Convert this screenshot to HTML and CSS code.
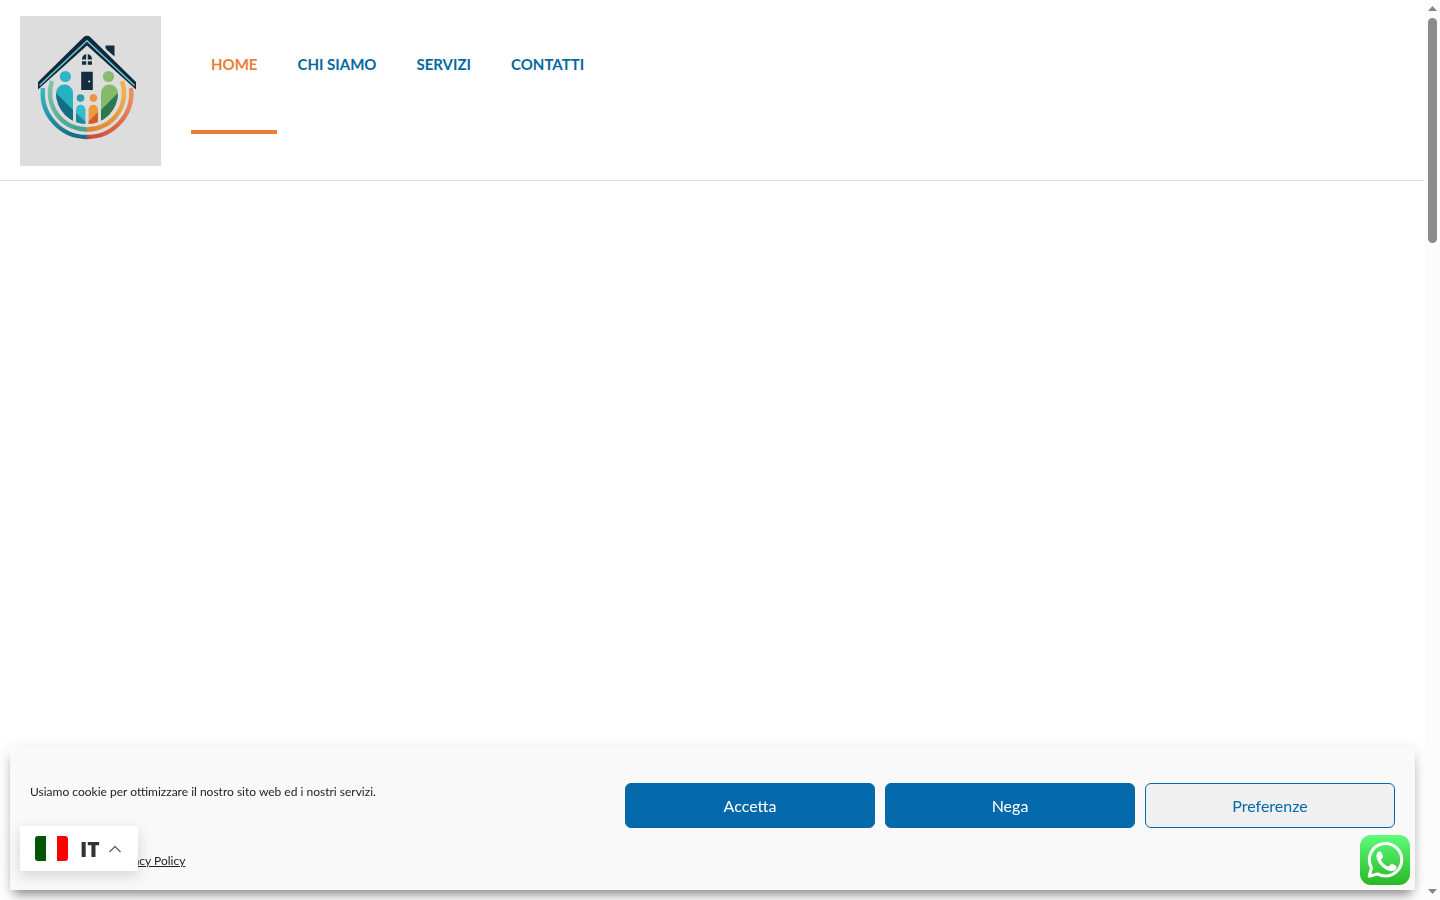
FILE: index.html
```html
<!DOCTYPE html>
<html lang="it">
<head>
<meta charset="utf-8">
<meta name="viewport" content="width=device-width, initial-scale=1">
<title>Home</title>
<link rel="stylesheet" href="styles.css">
</head>
<body>
<header class="site-header">
  <a class="logo" href="#" aria-label="Home">
    <svg viewBox="20 16 141 150" width="141" height="150" aria-hidden="true">
      <defs>
        <linearGradient id="outerL" x1="0" y1="0" x2="0.6" y2="1"><stop offset="0" stop-color="#35b8c6"/><stop offset="1" stop-color="#176d88"/></linearGradient>
        <linearGradient id="outerR" x1="0" y1="1" x2="0.7" y2="0"><stop offset="0" stop-color="#cc4639"/><stop offset="1" stop-color="#ee8c5c"/></linearGradient>
        <linearGradient id="innerL" x1="0" y1="0" x2="0.6" y2="1"><stop offset="0" stop-color="#7fc5aa"/><stop offset="1" stop-color="#4da393"/></linearGradient>
        <linearGradient id="innerR" x1="0" y1="1" x2="0.7" y2="0"><stop offset="0" stop-color="#df822f"/><stop offset="1" stop-color="#efb04e"/></linearGradient>
        <clipPath id="bowl"><circle cx="87" cy="93" r="31"/></clipPath>
        <clipPath id="adultL"><path d="M56 130V93a8.500 8.500 0 0 1 17 0V130z"/></clipPath>
        <clipPath id="adultR"><path d="M101 130V93a8.500 8.500 0 0 1 17 0V130z"/></clipPath>
        <clipPath id="childL"><path d="M76 130V109.500a4.700 4.700 0 0 1 9.400 0V130z"/></clipPath>
        <clipPath id="childR"><path d="M88.600 130V109.500a4.700 4.700 0 0 1 9.400 0V130z"/></clipPath>
      </defs>
      <rect x="20" y="16" width="141" height="150" fill="#dcdddc"/>
      <g fill="none" stroke-width="4.400">
        <path d="M43 88A44 44 0 0 0 87 137" stroke="url(#outerL)"/>
        <path d="M87 137A44 44 0 0 0 131 88" stroke="url(#outerR)"/>
        <path d="M52 81A36.500 36.500 0 0 0 87 129.500" stroke="url(#innerL)"/>
        <path d="M87 129.500A36.500 36.500 0 0 0 122 81" stroke="url(#innerR)"/>
      </g>
      <path d="M105.500 45.500h9v11l-7.500-6.500-1.500-2z" fill="#142c3d"/>
      <path d="M38 82L83.500 37.300a5 5 0 0 1 7 0L136 82v7.500L87 45.500 38 89.500z" fill="#102a3b"/>
      <path d="M39.500 85.500L87 40.800 134.500 85.500" fill="none" stroke="#6fcbd3" stroke-width="1.500"/>
      <path d="M82 59.500a5 5 0 0 1 4.200-5.500v5.500zM87.800 54a5 5 0 0 1 4.200 5.500h-4.200zM82 61.300h4.200v3.500H82zM87.800 61.300H92v3.500h-4.200zM81.200 71.800h11.600V90H81.200z" fill="#142c3d"/>
      <circle cx="89.200" cy="81.500" r="1" fill="#eee"/>
      <circle cx="65.400" cy="76.500" r="5.600" fill="#2fb5c5"/>
      <circle cx="108.500" cy="76.500" r="5.600" fill="#8abb6d"/>
      <circle cx="80.500" cy="98" r="3.800" fill="#299eaf"/>
      <circle cx="93.400" cy="98" r="3.800" fill="#ed933f"/>
      <g clip-path="url(#bowl)">
        <g clip-path="url(#adultL)"><path d="M54 82h21v50H54z" fill="#25b3c4"/><path d="M54 91l20 20v20H54z" fill="#146c85"/></g>
        <g clip-path="url(#adultR)"><path d="M100 82h20v50h-20z" fill="#85b96b"/><path d="M120 91l-20 20v20h20z" fill="#2d7851"/></g>
        <g clip-path="url(#childL)"><path d="M75 103h12v24H75z" fill="#37bdca"/><path d="M75 112l11 10v5H75z" fill="#218799"/></g>
        <g clip-path="url(#childR)"><path d="M88 103h11v24H88z" fill="#f09a3e"/><path d="M88 122l11-11v15H88z" fill="#d75a2c"/></g>
      </g>
    </svg>
  </a>
  <nav class="menu" aria-label="Principale">
    <a class="menu-item current" href="#" aria-current="page">HOME</a>
    <a class="menu-item" href="#">CHI SIAMO</a>
    <a class="menu-item" href="#">SERVIZI</a>
    <a class="menu-item" href="#">CONTATTI</a>
  </nav>
</header>
<main></main>

<section class="cookie" aria-label="Consenso cookie">
  <div class="cookie-row">
    <p class="message">Usiamo cookie per ottimizzare il nostro sito web ed i nostri servizi.</p>
    <div class="buttons">
      <button class="btn" type="button">Accetta</button>
      <button class="btn" type="button">Nega</button>
      <button class="btn outline" type="button">Preferenze</button>
    </div>
  </div>
  <div class="links"><a href="#">Privacy Policy</a></div>
</section>

<button class="language" type="button">
  <svg class="flag" viewBox="0 0 33 25" width="33" height="25" aria-hidden="true">
    <path d="M3 0h8v25H3a3 3 0 0 1-3-3V3a3 3 0 0 1 3-3z" fill="#005700"/>
    <path d="M22 0h8a3 3 0 0 1 3 3v19a3 3 0 0 1-3 3h-8z" fill="#fc0000"/>
  </svg>
  <span>IT</span>
  <svg class="chevron" viewBox="0 0 12 8" width="12" height="8" aria-hidden="true"><path d="M.5 7L6 1.500 11.500 7" fill="none" stroke="#666" stroke-width="1.400"/></svg>
</button>

<a class="whatsapp" href="#" aria-label="WhatsApp">
  <svg viewBox="0 0 50 50" width="50" height="50" aria-hidden="true">
    <defs><linearGradient id="wa" x1="0" y1="0" x2="0" y2="1"><stop offset="0" stop-color="#5ffb7b"/><stop offset="1" stop-color="#28b826"/></linearGradient></defs>
    <rect width="50" height="50" rx="11" fill="url(#wa)"/>
    <path d="M9.200 41.200l2.300-8.400a16.200 16.200 0 1 1 6.200 6.100z" fill="none" stroke="#fff" stroke-width="3" stroke-linejoin="round"/>
    <path d="M19 16.500h1.200c.5 0 .9.300 1.100.8l1.700 4c.2.500.1.900-.2 1.300l-1.500 1.900c-.3.300-.3.700-.1 1 1.600 2.700 3.800 4.700 6.800 6 .4.200.8.100 1-.2l1.800-2.200c.3-.4.700-.5 1.200-.3l3.900 1.900c.5.200.7.500.7.900 0 3-2.400 4.700-4.700 4.700-2.800 0-7.200-2-10.200-5-2.800-2.800-5.200-6.600-5.200-9.700 0-2.200 1-5.100 2.500-5.100z" fill="#fff"/>
  </svg>
</a>

<div class="scrollbar" aria-hidden="true">
  <svg viewBox="0 0 9 5" width="9" height="5"><path d="M0 5L4.500 0 9 5z" fill="#858585"/></svg>
  <div class="track"><div class="thumb"></div></div>
  <svg viewBox="0 0 9 5" width="9" height="5"><path d="M0 0h9L4.500 5z" fill="#858585"/></svg>
</div>
</body>
</html>
```
FILE: styles.css
```css
* { box-sizing: border-box; }

body {
  margin: 0;
  padding-right: 15px;
  min-height: 100vh;
  background: #fff;
  font-family: Lato, "Open Sans", sans-serif;
}

.site-header {
  display: flex;
  gap: 30px;
  padding: 16px 20px 14px;
  border-bottom: 1px solid #e2e2e2;
}

.logo svg { display: block; }

.menu {
  display: flex;
  align-items: flex-start;
}

.menu-item {
  height: 118px;
  padding: 36px 20px 0;
  color: #0369a1;
  font-size: 15px;
  font-weight: 700;
  line-height: 25px;
  text-decoration: none;
}

.menu-item.current {
  color: #ec7d34;
  border-bottom: 4px solid #ec7d34;
}

.cookie {
  position: fixed;
  left: 10px;
  right: 25px;
  bottom: 10px;
  padding: 36px 20px 20px;
  background: #f9f9f9;
  box-shadow: 0 8px 10px -4px rgba(0, 0, 0, .4), 0 4px 16px rgba(0, 0, 0, .14);
  color: #222;
  font-size: 12px;
  line-height: 18px;
}

.cookie-row {
  display: flex;
  justify-content: space-between;
  gap: 20px;
}

.message { margin: 0; }

.buttons {
  display: flex;
  gap: 10px;
}

.btn {
  width: 250px;
  height: 45px;
  border: 1px solid #0369aa;
  border-radius: 6px;
  background: #0369aa;
  color: #fff;
  font-family: inherit;
  font-size: 16px;
}

.btn.outline {
  background: #f0f0f0;
  color: #0369aa;
}

.links {
  padding: 24px 0 0 83px;
}

.links a { color: #222; }

.language {
  position: fixed;
  left: 20px;
  bottom: 29px;
  display: flex;
  align-items: center;
  width: 118px;
  height: 45px;
  padding: 0 15px;
  border: 0;
  background: #fff;
  box-shadow: 0 5px 15px rgba(0, 0, 0, .15);
  color: #333;
  font-family: "Open Sans", sans-serif;
  font-size: 21px;
  font-weight: 800;
}

.language span { margin: 0 9px 0 12px; }

.whatsapp {
  position: fixed;
  right: 30px;
  bottom: 15px;
}

.whatsapp svg { display: block; }

.scrollbar {
  position: fixed;
  top: 0;
  right: 0;
  bottom: 0;
  display: flex;
  flex-direction: column;
  align-items: center;
  gap: 7px;
  width: 15px;
  padding: 6px 0;
  background: #fcfcfc;
}

.track { flex: 1; }

.thumb {
  width: 9px;
  height: 26%;
  border-radius: 5px;
  background: #8b8b8b;
}
```
